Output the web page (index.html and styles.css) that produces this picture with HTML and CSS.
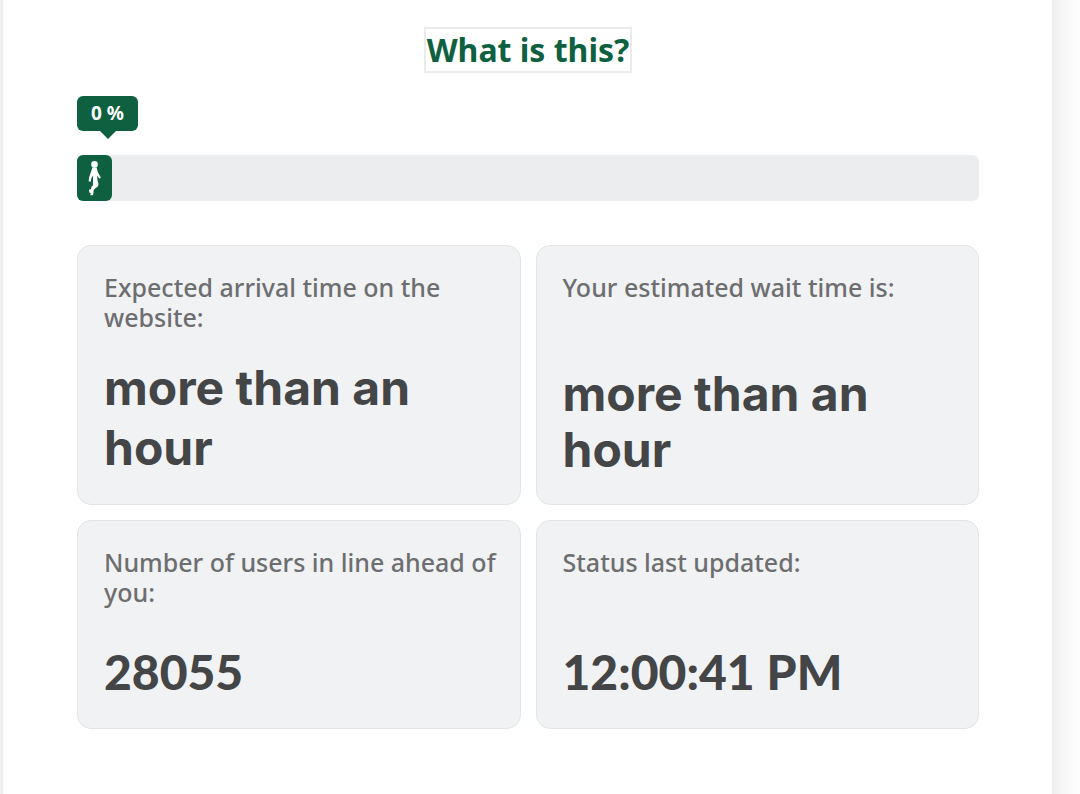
FILE: index.html
```html
<!DOCTYPE html>
<html lang="en">
<head>
    <meta charset="utf-8">
    <title>Waiting room</title>
    <link rel="stylesheet" href="styles.css">
</head>
<body>
    <div class="page">
        <main class="queue-panel">
            <button type="button" class="help-button">What is this?</button>

            <!-- Progress -->
            <div class="progress">
                <div class="progress-label">0 %</div>
                <div class="progress-bar" role="progressbar" aria-label="Queue progress" aria-valuemin="0" aria-valuemax="100" aria-valuenow="0">
                    <div class="progress-fill">
                        <svg class="walker" viewBox="0 0 16 36" aria-hidden="true">
                            <circle cx="7.5" cy="4.4" r="3.3"/>
                            <path d="M5.4 7.5h4.2l1.2 4.5 3 5.6-1.6 1.2-2.2-3.3.3 3.8 1.2 4.6-.5 2.4-2.9 2.3-1.4 1.5-.3 3.2-.5 1.9H3.4l.3-2.3-1.4-.3-.3-3.1 2-.3.4-2.4 1.5-1.2.2-10-1.8 2.8-.6 3.4-2.1-.5.7-4.5z"/>
                        </svg>
                    </div>
                </div>
            </div>

            <!-- Queue status -->
            <div class="cards">
                <section class="card">
                    <div class="card-label">Expected arrival time on the website:</div>
                    <div class="card-value">more than an hour</div>
                </section>
                <section class="card">
                    <div class="card-label">Your estimated wait time is:</div>
                    <div class="card-value compact">more than an hour</div>
                </section>
                <section class="card">
                    <div class="card-label">Number of users in line ahead of you:</div>
                    <div class="card-value numeric">28055</div>
                </section>
                <section class="card">
                    <div class="card-label">Status last updated:</div>
                    <div class="card-value numeric">12:00:41&#8239;PM</div>
                </section>
            </div>
        </main>
    </div>
</body>
</html>
```

FILE: styles.css
```css
* {
    box-sizing: border-box;
}

body {
    margin: 0;
    background: #fff;
    font-family: "Noto Sans", sans-serif;
}

.page {
    display: flex;
    min-height: 100vh;
    overflow: hidden;
}

/* runs past the top and bottom so the shadow only shows at the sides */
.queue-panel {
    flex: 1;
    margin: -40px 28px -40px 3px;
    padding: 67px 73px 105px 74px;
    background: #fff;
    box-shadow: 0 0 32px rgba(0, 0, 0, 0.15);
}

.help-button {
    display: block;
    margin: 0 auto;
    padding: 0 1px;
    background: #fff;
    border: 2px solid #ebebeb;
    color: #0e6040;
    font-family: "Noto Sans", sans-serif;
    font-size: 32px;
    font-weight: 700;
    line-height: 42px;
    cursor: pointer;
}

/* Progress */
.progress {
    margin: 23px 0 44px;
}

.progress-label {
    position: relative;
    width: 61px;
    margin-bottom: 24px;
    border-radius: 6px;
    background: #0e6040;
    color: #fff;
    font-size: 19px;
    font-weight: 700;
    line-height: 35px;
    text-align: center;
}

.progress-label::after {
    content: "";
    position: absolute;
    top: 100%;
    left: 23px;
    border: 8px solid transparent;
    border-top-color: #0e6040;
    border-bottom: 0;
}

.progress-bar {
    height: 46px;
    border-radius: 6px;
    background: #ecedee;
}

.progress-fill {
    display: flex;
    align-items: center;
    justify-content: center;
    width: 35px;
    height: 100%;
    border-radius: 6px;
    background: #0e6040;
}

.walker {
    width: 16px;
    height: 36px;
    fill: #fff;
}

/* Status cards */
.cards {
    display: grid;
    grid-template-columns: 1fr 1fr;
    gap: 15px;
}

.card {
    display: flex;
    flex-direction: column;
    justify-content: space-between;
    gap: 26px;
    min-height: 209px;
    padding: 26px 20px 26px 26px;
    background: #f1f2f4;
    border: 1px solid #e4e5e6;
    border-radius: 14px;
}

.card-label {
    color: #6d6e70;
    font-size: 25px;
    font-weight: 500;
    line-height: 30px;
}

.card-value {
    color: #444547;
    font-family: Inter, sans-serif;
    font-size: 48px;
    font-weight: 700;
    line-height: 60px;
}

.card-value.compact {
    line-height: 56px;
}

.card-value.numeric {
    font-family: Lato, sans-serif;
    font-weight: 900;
}
```
